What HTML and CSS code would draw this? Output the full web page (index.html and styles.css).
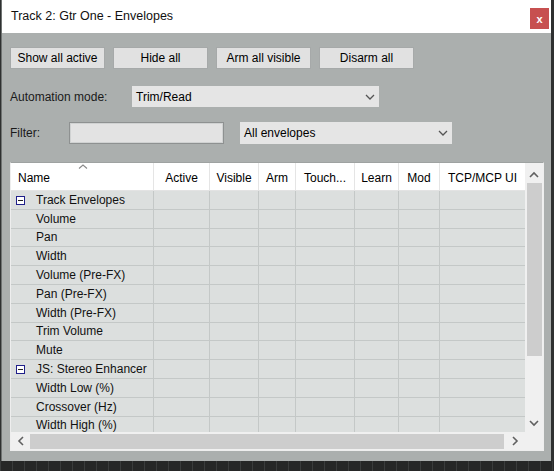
FILE: index.html
```html
<!doctype html>
<html lang="en-us">
  <head>
    <meta charset="utf-8">
    <title>Track 2: Gtr One - Envelopes</title>
    <link rel="stylesheet" href="styles.css">
  </head>
  <body>
    <div class="dialog">
        <div class="titlebar">
            <span class="title">Track 2: Gtr One - Envelopes</span>
            <span class="close">x</span>
        </div>
        <div class="content">
            <div class="buttons">
                <button>Show all active</button>
                <button>Hide all</button>
                <button>Arm all visible</button>
                <button>Disarm all</button>
            </div>
            <div class="row mode">
                <span class="label mode-label">Automation mode:</span>
                <div class="combo mode-combo">
                    <span>Trim/Read</span>
                    <svg class="chev" width="10" height="6" viewBox="0 0 10 6"><path d="M1 1 L5 5 L9 1" fill="none" stroke="#555" stroke-width="1.3"/></svg>
                </div>
            </div>
            <div class="row filter">
                <span class="label filter-label">Filter:</span>
                <div class="textbox"></div>
                <div class="combo env-combo">
                    <span>All envelopes</span>
                    <svg class="chev" width="10" height="6" viewBox="0 0 10 6"><path d="M1 1 L5 5 L9 1" fill="none" stroke="#555" stroke-width="1.3"/></svg>
                </div>
            </div>
            <div class="list">
                <div class="list-main">
                    <div class="grid">
                        <div class="hdr">
                            <div class="c c1 name-h">Name
                                <svg class="sort" width="10" height="5" viewBox="0 0 10 5"><path d="M1 4.5 L5 1 L9 4.5" fill="none" stroke="#8a8a8a" stroke-width="1.1"/></svg>
                            </div>
                            <div class="c c2">Active</div>
                            <div class="c c3">Visible</div>
                            <div class="c c4">Arm</div>
                            <div class="c c5">Touch...</div>
                            <div class="c c6">Learn</div>
                            <div class="c c7">Mod</div>
                            <div class="c c8">TCP/MCP UI</div>
                        </div>
                        <div class="rows">
                            <div class="r"><div class="c c1"><span class="tree"></span>Track Envelopes</div><div class="c c2"></div><div class="c c3"></div><div class="c c4"></div><div class="c c5"></div><div class="c c6"></div><div class="c c7"></div><div class="c c8"></div></div>
                            <div class="r"><div class="c c1">Volume</div><div class="c c2"></div><div class="c c3"></div><div class="c c4"></div><div class="c c5"></div><div class="c c6"></div><div class="c c7"></div><div class="c c8"></div></div>
                            <div class="r"><div class="c c1">Pan</div><div class="c c2"></div><div class="c c3"></div><div class="c c4"></div><div class="c c5"></div><div class="c c6"></div><div class="c c7"></div><div class="c c8"></div></div>
                            <div class="r"><div class="c c1">Width</div><div class="c c2"></div><div class="c c3"></div><div class="c c4"></div><div class="c c5"></div><div class="c c6"></div><div class="c c7"></div><div class="c c8"></div></div>
                            <div class="r"><div class="c c1">Volume (Pre-FX)</div><div class="c c2"></div><div class="c c3"></div><div class="c c4"></div><div class="c c5"></div><div class="c c6"></div><div class="c c7"></div><div class="c c8"></div></div>
                            <div class="r"><div class="c c1">Pan (Pre-FX)</div><div class="c c2"></div><div class="c c3"></div><div class="c c4"></div><div class="c c5"></div><div class="c c6"></div><div class="c c7"></div><div class="c c8"></div></div>
                            <div class="r"><div class="c c1">Width (Pre-FX)</div><div class="c c2"></div><div class="c c3"></div><div class="c c4"></div><div class="c c5"></div><div class="c c6"></div><div class="c c7"></div><div class="c c8"></div></div>
                            <div class="r"><div class="c c1">Trim Volume</div><div class="c c2"></div><div class="c c3"></div><div class="c c4"></div><div class="c c5"></div><div class="c c6"></div><div class="c c7"></div><div class="c c8"></div></div>
                            <div class="r"><div class="c c1">Mute</div><div class="c c2"></div><div class="c c3"></div><div class="c c4"></div><div class="c c5"></div><div class="c c6"></div><div class="c c7"></div><div class="c c8"></div></div>
                            <div class="r"><div class="c c1"><span class="tree"></span>JS: Stereo Enhancer</div><div class="c c2"></div><div class="c c3"></div><div class="c c4"></div><div class="c c5"></div><div class="c c6"></div><div class="c c7"></div><div class="c c8"></div></div>
                            <div class="r"><div class="c c1">Width Low (%)</div><div class="c c2"></div><div class="c c3"></div><div class="c c4"></div><div class="c c5"></div><div class="c c6"></div><div class="c c7"></div><div class="c c8"></div></div>
                            <div class="r"><div class="c c1">Crossover (Hz)</div><div class="c c2"></div><div class="c c3"></div><div class="c c4"></div><div class="c c5"></div><div class="c c6"></div><div class="c c7"></div><div class="c c8"></div></div>
                            <div class="r"><div class="c c1">Width High (%)</div><div class="c c2"></div><div class="c c3"></div><div class="c c4"></div><div class="c c5"></div><div class="c c6"></div><div class="c c7"></div><div class="c c8"></div></div>
                        </div>
                    </div>
                    <div class="vscroll">
                        <svg class="arrow" width="18" height="20" viewBox="0 0 18 20"><path d="M5 14 L9 10 L13 14" fill="none" stroke="#606060" stroke-width="1.6"/></svg>
                        <div class="vthumb"></div>
                        <div class="vtrack"></div>
                        <svg class="arrow" width="18" height="20" viewBox="0 0 18 20"><path d="M5 9 L9 13 L13 9" fill="none" stroke="#606060" stroke-width="1.6"/></svg>
                    </div>
                </div>
                <div class="hscroll-row">
                    <div class="hscroll">
                        <svg class="arrow" width="19" height="18" viewBox="0 0 19 18"><path d="M12 5 L8 9 L12 13" fill="none" stroke="#606060" stroke-width="1.6"/></svg>
                        <div class="hthumb"></div>
                        <svg class="arrow" width="21" height="18" viewBox="0 0 21 18"><path d="M9 5 L13 9 L9 13" fill="none" stroke="#606060" stroke-width="1.6"/></svg>
                    </div>
                    <div class="corner"></div>
                </div>
            </div>
        </div>
    </div>
    <div class="timeline"></div>
  </body>
</html>
```

FILE: styles.css
```css
div, span, button { box-sizing: border-box; }
body { margin: 0; width: 554px; height: 471px; overflow: hidden; background: #2e3030; font-family: "Liberation Sans", Arial, sans-serif; font-size: 12px; color: #000; }

.dialog { margin-left: 1px; width: 550px; height: 461px; background: #abafae; border-left: 1px solid #6f7372; display: flex; flex-direction: column; }
.titlebar { height: 33px; flex: none; background: #fff; display: flex; align-items: flex-start; padding-left: 9px; }
.title { font-size: 12.5px; margin-top: 9px; color: #111; }
.close { margin-left: auto; margin-right: 2px; margin-top: 8px; width: 19px; height: 21px; background: #c75050; color: #fff; font-weight: bold; font-size: 11px; display: flex; align-items: center; justify-content: center; }

.content { padding: 14px 0 0 8px; }
.buttons { display: flex; gap: 8px; }
.buttons button { width: 95px; height: 22px; padding: 0; background: #e1e1e1; border: 1px solid #a6a9a9; font-family: inherit; font-size: 12px; color: #000; }

.row { display: flex; align-items: center; }
.mode { margin-top: 17px; height: 21px; }
.filter { margin-top: 15px; height: 22px; }
.label { color: #1a1a1a; }
.mode-label { width: 122px; }
.filter-label { width: 59px; }

.combo { height: 100%; background: #e5e5e5; display: flex; align-items: center; padding: 0 0 0 4px; }
.combo .chev { margin-left: auto; margin-right: 4px; }
.mode-combo { width: 247px; }
.env-combo { width: 212px; margin-left: 16px; }
.textbox { width: 155px; height: 22px; background: #e3e3e3; border: 1px solid #8e9191; box-shadow: inset 0 0 0 1px #d0d2d2; }

.list { margin-top: 18px; width: 534px; border: 1px solid #eeeeee; border-top-color: #9ea2a1; display: flex; flex-direction: column; }
.list-main { display: flex; height: 269px; }
.grid { width: 514px; overflow: hidden; }
.hdr { display: flex; height: 28px; background: #fff; border-bottom: 1px solid #e3e3e3; }
.hdr .c { border-right: 1px solid #e5e5e5; display: flex; align-items: center; justify-content: center; padding-top: 3px; }
.hdr .name-h { justify-content: flex-start; padding-left: 7px; position: relative; }
.sort { position: absolute; left: 67px; top: 1px; }
.c { flex: none; height: 100%; border-right: 1px solid #c4c8c7; }
.c1 { width: 143px; }
.c2 { width: 56px; }
.c3 { width: 49px; }
.c4 { width: 37px; }
.c5 { width: 59px; }
.c6 { width: 44px; }
.c7 { width: 41px; }
.c8 { width: 85px; }
.hdr .c8, .r .c8 { border-right: none; }

.rows { background: #dcdfde; }
.r { display: flex; height: 18.8px; border-bottom: 1px solid #c4c8c7; }
.r .c1 { padding-left: 25px; display: flex; align-items: center; color: #111; position: relative; }
.tree { position: absolute; left: 5px; top: 5px; width: 9px; height: 9px; border: 1px solid #1f1f8a; background: #fff; }
.tree::after { content: ""; position: absolute; left: 1px; top: 3px; width: 5px; height: 1px; background: #222; }

.vscroll { width: 18px; background: #f0f0f0; display: flex; flex-direction: column; }
.vscroll .arrow { flex: none; }
.vthumb { height: 173px; margin: 0 1px 0 2px; background: #cdcdcd; }
.vtrack { flex: 1; }
.hscroll-row { display: flex; height: 18px; }
.hscroll { width: 514px; background: #f0f0f0; display: flex; align-items: stretch; }
.hthumb { width: 474px; margin: 2px 0 1px 0; background: #cdcdcd; }
.hscroll .arrow { flex: none; }
.hscroll .arrow:last-child { margin-left: auto; }
.corner { width: 18px; background: #f0f0f0; }

.timeline { height: 10px; margin-top: 0; background: repeating-linear-gradient(90deg, #3a3c3c 0 1px, #262727 1px 12px); }
```
